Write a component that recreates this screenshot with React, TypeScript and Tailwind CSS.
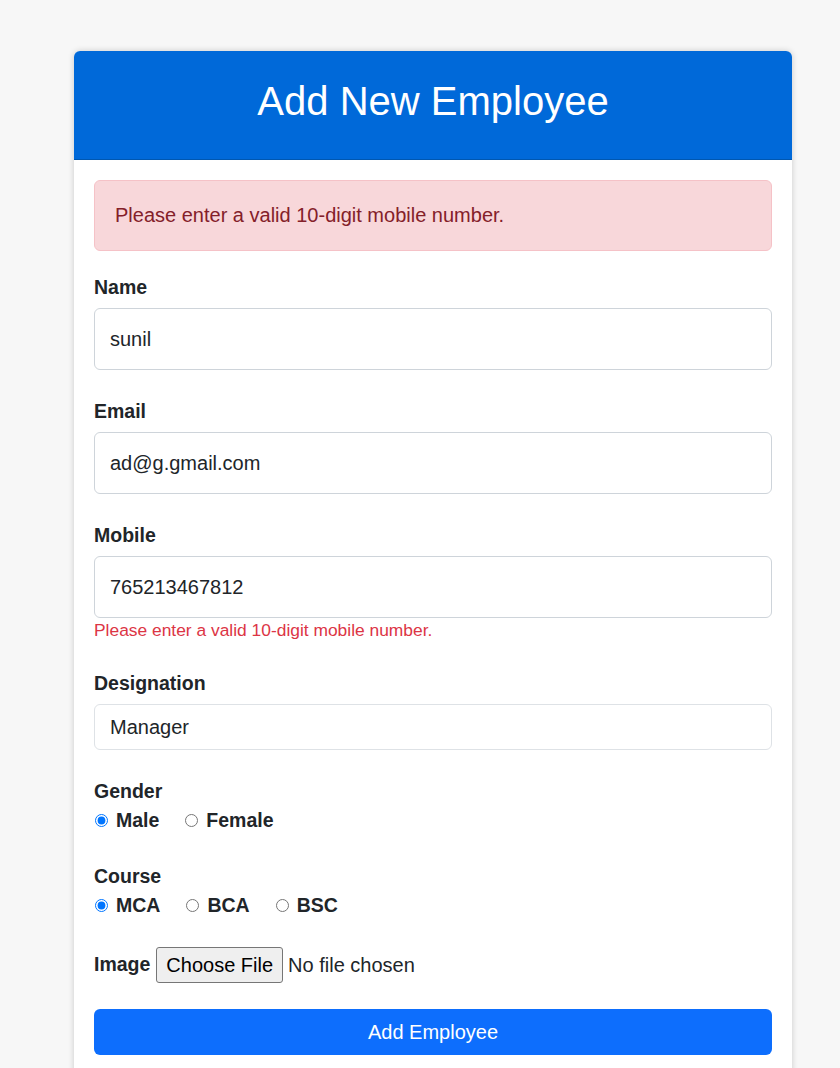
import React from "react";

const labelCls = "block text-[19.5px] leading-[24px] font-bold text-[#212529] mb-[9px]";
const inputCls =
  "block w-full h-[62px] rounded-[6px] border border-[#ced4da] bg-white px-[15px] text-[20px] text-[#212529] outline-none";

function Field({ label, value, children }: { label: string; value: string; children?: React.ReactNode }) {
  return (
    <div className="mb-[29px]">
      <label className={labelCls}>{label}</label>
      <input className={inputCls} defaultValue={value} />
      {children}
    </div>
  );
}

function Radio({ name, label, checked }: { name: string; label: string; checked?: boolean }) {
  return (
    <label className="flex items-center gap-[8px] text-[19.5px] leading-[24px] font-bold text-[#212529]">
      <input type="radio" name={name} defaultChecked={checked} className="m-0 ml-[1px] h-[13px] w-[13px] accent-[#0075ff]" />
      {label}
    </label>
  );
}

export default function App() {
  return (
    <div className="min-h-[1068px] bg-[#f7f7f7] pt-[51px] font-['Liberation_Sans',Arial,sans-serif] text-[#212529]">
      <div className="ml-[74px] w-[718px] overflow-hidden rounded-t-[6px] bg-white shadow-[0_0_6px_rgba(0,0,0,0.18)]">
        <div className="flex h-[109px] items-center justify-center border-b border-[#0057b0] bg-[#0069d9] pb-[8px]">
          <h1 className="text-[40px] leading-none text-white">Add New Employee</h1>
        </div>
        <div className="px-[20px] pt-[20px] pb-[40px]">
          <div className="mb-[24px] rounded-[6px] border border-[#f5c2c7] bg-[#f8d7da] px-[20px] py-[21px] text-[20px] leading-[27px] text-[#842029]">
            Please enter a valid 10-digit mobile number.
          </div>
          <Field label="Name" value="sunil" />
          <Field label="Email" value="ad@g.gmail.com" />
          <div className="mb-[29px]">
            <label className={labelCls}>Mobile</label>
            <input className={inputCls} defaultValue="765213467812" />
            <div className="text-[17.4px] leading-[24px] text-[#dc3545]">
              Please enter a valid 10-digit mobile number.
            </div>
          </div>
          <div className="mb-[29px]">
            <label className={labelCls}>Designation</label>
            <input
              className="block h-[46px] w-full rounded-[6px] border border-[#dee2e6] bg-white px-[15px] text-[20px] text-[#212529] outline-none"
              defaultValue="Manager"
            />
          </div>
          <div className="mb-[32px]">
            <div className="text-[19.5px] leading-[24px] font-bold">Gender</div>
            <div className="mt-[5px] flex gap-[25px]">
              <Radio name="gender" label="Male" checked />
              <Radio name="gender" label="Female" />
            </div>
          </div>
          <div className="mb-[30px]">
            <div className="text-[19.5px] leading-[24px] font-bold">Course</div>
            <div className="mt-[5px] flex gap-[25px]">
              <Radio name="course" label="MCA" checked />
              <Radio name="course" label="BCA" />
              <Radio name="course" label="BSC" />
            </div>
          </div>
          <div className="mb-[26px] flex items-center">
            <span className="mr-[6px] text-[19.5px] font-bold">Image</span>
            <button className="h-[36px] rounded-[3px] border border-[#767676] bg-[#efefef] px-[9px] text-[20px] text-black">
              Choose File
            </button>
            <span className="ml-[5px] text-[20px] text-[#212529]">No file chosen</span>
          </div>
          <button className="h-[46px] w-full rounded-[6px] bg-[#0d6efd] text-[20px] text-white">Add Employee</button>
        </div>
      </div>
    </div>
  );
}
